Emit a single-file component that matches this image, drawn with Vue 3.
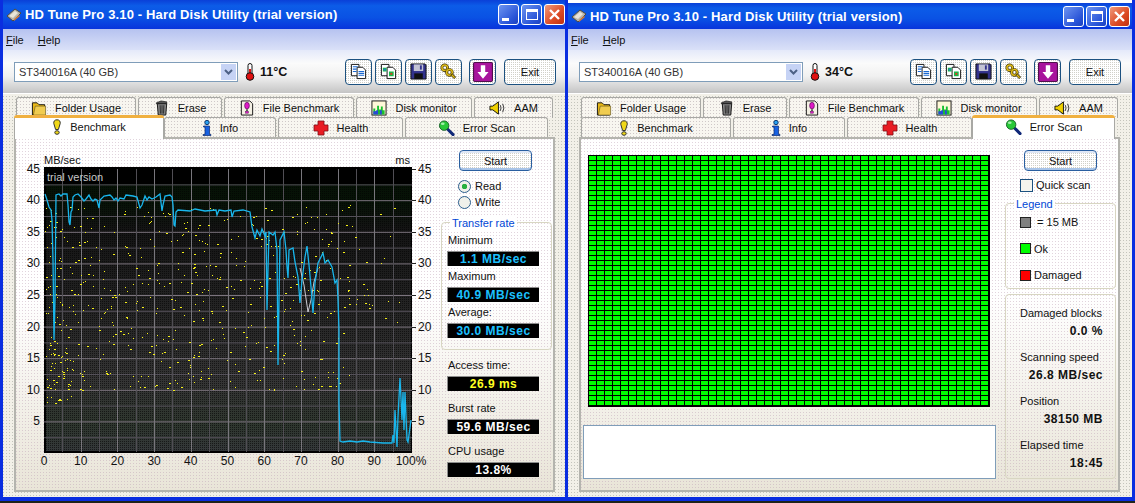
<template>
  <div class="screen">
    <!-- shared icon sheet, both windows <use> from here -->
    <svg class="defs" width="0" height="0">
      <symbol id="i-drive" viewBox="0 0 16 16">
        <path d="M1 9 9 2l6 4-8 8z" fill="#b9b5a8" stroke="#4a4a44"/>
        <path d="M3 9 9 4l3 2-5 5z" fill="#e8e4d8"/>
        <path d="M8 12l5-4 1 1-6 5z" fill="#d27a3a"/>
      </symbol>
      <symbol id="i-thermo" viewBox="0 0 10 18">
        <rect x="3" y="0.5" width="4" height="12" rx="2" fill="#fff" stroke="#111"/>
        <rect x="4" y="6" width="2" height="7" fill="#e01010"/>
        <circle cx="5" cy="13.5" r="3.8" fill="#e01010" stroke="#111"/>
      </symbol>
      <symbol id="i-copy" viewBox="0 0 18 18">
        <path d="M1.5 1.5h8v12h-8z" fill="#fff" stroke="#111"/>
        <path d="M7.5 4.5h6l3 3v9h-9z" fill="#fff" stroke="#111"/>
        <path d="M3 4h5M3 6.500h4M3 9h4M9 9h6M9 11h6M9 13h6" stroke="#1a68d0" stroke-width="1.200"/>
      </symbol>
      <symbol id="i-copy2" viewBox="0 0 18 18">
        <path d="M1.500 1.500h8v12h-8z" fill="#fff" stroke="#111"/>
        <path d="M7.500 4.500h6l3 3v9h-9z" fill="#fff" stroke="#111"/>
        <rect x="3" y="5" width="4" height="4" fill="#18b84a"/>
        <rect x="4" y="6" width="2" height="2" fill="#2a70e0"/>
        <rect x="9.500" y="9" width="5" height="5" fill="#18b84a"/>
        <rect x="11" y="10.500" width="2" height="2" fill="#e03c20"/>
      </symbol>
      <symbol id="i-floppy" viewBox="0 0 18 18">
        <path d="M1 1h15l1 1v15H1z" fill="#33338c" stroke="#111"/>
        <rect x="4" y="1.500" width="10" height="7" fill="#c4c4d4"/>
        <rect x="10.500" y="2.500" width="2" height="4.500" fill="#33338c"/>
        <rect x="4.500" y="11" width="9" height="6" fill="#111"/>
      </symbol>
      <symbol id="i-chain" viewBox="0 0 18 18">
        <circle cx="5" cy="5" r="3" fill="none" stroke="#3a3008" stroke-width="3"/>
        <circle cx="5" cy="5" r="3" fill="none" stroke="#e0bc18" stroke-width="1.600"/>
        <circle cx="10" cy="10" r="3" fill="none" stroke="#3a3008" stroke-width="3"/>
        <circle cx="10" cy="10" r="3" fill="none" stroke="#e0bc18" stroke-width="1.600"/>
        <path d="M12 12l4 4" stroke="#3a3008" stroke-width="3"/>
        <path d="M12.500 12.500l3 3" stroke="#e0bc18" stroke-width="1.500"/>
      </symbol>
      <symbol id="i-down" viewBox="0 0 18 18">
        <rect x="0.500" y="0.500" width="17" height="17" rx="1" fill="#a8149c" stroke="#50104c"/>
        <path d="M7 3h4v6h3l-5 6-5-6h3z" fill="#fff"/>
      </symbol>
      <symbol id="i-folder" viewBox="0 0 16 17">
        <path d="M1 3h5l2 2h6v11H1z" fill="#e8b818" stroke="#111"/>
        <path d="M4 6.500h11V16H2z" fill="#f0cc50" stroke="#5a4a10" stroke-width="0.600"/>
      </symbol>
      <symbol id="i-trash" viewBox="0 0 16 17">
        <path d="M2 3l5-2 6 1v2H2z" fill="#555" stroke="#111" stroke-width="0.700"/>
        <path d="M3 4h10l-1 12H4z" fill="#8a8a8a" stroke="#111"/>
        <path d="M6 5.500l.3 9M8 5.500v9M10 5.500l-.3 9" stroke="#222"/>
      </symbol>
      <symbol id="i-file" viewBox="0 0 16 17">
        <path d="M2 1h9l3 3v12H2z" fill="#f4f0e4" stroke="#111"/>
        <ellipse cx="8" cy="6" rx="2.500" ry="3.500" fill="#e018c8" stroke="#501050" stroke-width="0.700"/>
        <rect x="7" y="10" width="2" height="1.500" fill="#333"/>
        <rect x="6.500" y="12" width="3" height="2" fill="#e018c8" stroke="#501050" stroke-width="0.500"/>
      </symbol>
      <symbol id="i-chart" viewBox="0 0 16 17">
        <rect x="0.500" y="1" width="15" height="15" fill="#fff8d8" stroke="#111"/>
        <path d="M2 15.500V9h2v3h2V6h2v4h2V7h2v4h2v4.500z" fill="#18c030"/>
        <path d="M2 15.500V12h3v-1h2v4.500zM9 15.500V11h2v4.500z" fill="#2848d8"/>
      </symbol>
      <symbol id="i-speaker" viewBox="0 0 18 16">
        <path d="M1 6h3l6-4.500v13L4 10H1z" fill="#f0d000" stroke="#111"/>
        <path d="M12 5q1.500 3 0 6M14.500 3.500q2.500 4.500 0 9" fill="none" stroke="#333"/>
      </symbol>
      <symbol id="i-bulb" viewBox="0 0 10 16">
        <path d="M5 .8C2.500.8 1.500 2.500 1.800 4.500L3.600 10.500h2.800L8.200 4.500C8.500 2.500 7.500.8 5 .8z" fill="#f0d818" stroke="#333"/>
        <ellipse cx="5" cy="13.500" rx="2.200" ry="1.800" fill="#f0d818" stroke="#333"/>
      </symbol>
      <symbol id="i-info" viewBox="0 0 10 16">
        <circle cx="5" cy="2.500" r="2.200" fill="#28a0f0" stroke="#103870"/>
        <path d="M1.500 6h6v8.500h1.500v1H1v-1h2V7H1.500z" fill="#1860e0" stroke="#0a2870" stroke-width="0.700"/>
      </symbol>
      <symbol id="i-cross" viewBox="0 0 16 16">
        <path d="M5 1h6v4h4v6h-4v4H5v-4H1V5h4z" fill="#e81c24" stroke="#801018" stroke-width="0.800"/>
      </symbol>
      <symbol id="i-lens" viewBox="0 0 17 17">
        <path d="M9.500 9.500l6 6" stroke="#102878" stroke-width="3.200" stroke-linecap="round"/>
        <circle cx="6" cy="6" r="5" fill="#28c838" stroke="#186028"/>
        <ellipse cx="4.500" cy="4" rx="2" ry="1.300" fill="#9ff0a8"/>
      </symbol>
    </svg>

    <div v-for="win in windows" :key="win.id" class="window">
      <div class="titlebar">
        <svg class="title-icon"><use href="#i-drive" /></svg>
        <span class="title-text">HD Tune Pro 3.10 - Hard Disk Utility (trial version)</span>
        <div class="caption">
          <span class="cap cap-min"><i></i></span>
          <span class="cap cap-max"><i></i></span>
          <span class="cap cap-close">
            <svg width="13" height="13" viewBox="0 0 13 13"><path d="M2 2l9 9M11 2l-9 9" stroke="#fff" stroke-width="2.400" /></svg>
          </span>
        </div>
      </div>

      <div class="menubar">
        <span><u>F</u>ile</span>
        <span><u>H</u>elp</span>
      </div>

      <div class="toolbar">
        <div class="combo">
          <span>ST340016A (40 GB)</span>
          <span class="combo-btn">
            <svg width="9" height="6" viewBox="0 0 9 6"><path d="M1 1l3.500 3.500L8 1" fill="none" stroke="#4d6185" stroke-width="2" /></svg>
          </span>
        </div>
        <svg class="thermo"><use href="#i-thermo" /></svg>
        <b class="temp">{{ win.temp }}</b>
        <div class="tools">
          <button v-for="t in tools" :key="t" class="tool" :class="{ 'tool-gap': t === 'i-down' }">
            <svg :class="{ 'tool-big': t === 'i-down' }"><use :href="'#' + t" /></svg>
          </button>
          <button class="exit">Exit</button>
        </div>
      </div>

      <div class="tabstrip">
        <div v-for="(row, r) in tabRows" :key="r" class="tabrow">
          <div
            v-for="tab in row"
            :key="tab.label"
            class="tab"
            :class="{ active: tab.label === win.active }"
            :style="{ width: tab.width + 'px' }"
          >
            <svg class="tab-icon" :style="{ width: tab.size + 'px' }"><use :href="'#' + tab.icon" /></svg>
            <span>{{ tab.label }}</span>
          </div>
        </div>
      </div>

      <div class="panel">
        <!-- Benchmark page -->
        <template v-if="win.active === 'Benchmark'">
          <div class="chart">
            <div class="axis axis-left">
              <span v-for="t in yTicks" :key="t" class="tick" :style="{ top: yOf(t) - 167 + 'px' }">{{ t }}</span>
            </div>
            <div class="plot">
              <span class="unit unit-mb">MB/sec</span>
              <span class="unit unit-ms">ms</span>
              <span class="trial">trial version</span>
              <!-- viewBox keeps screen coordinates, read straight off the capture -->
              <svg class="plot-svg" width="368" height="286" viewBox="44 167 368 286">
                <line v-for="y in hLines" :key="'h' + y.at" x1="44" x2="412" :y1="y.at" :y2="y.at" :stroke="y.major ? '#7c747e' : '#55515a'" />
                <line v-for="x in vLines" :key="'v' + x.at" y1="169" y2="452" :x1="x.at" :x2="x.at" :stroke="x.major ? '#78767c' : '#504e54'" />
                <rect v-for="(d, i) in dots" :key="i" :x="d[0]" :y="d[1]" :width="d[2]" height="1" fill="#f6f218" />
                <polyline :points="ghostLine" fill="none" stroke="#c8c8d0" stroke-width="1" />
                <polyline :points="readLine" fill="none" stroke="#19b6ec" stroke-width="1.300" />
              </svg>
              <span v-for="t in xTicks" :key="t" class="xtick" :style="{ left: (t * 3.67).toFixed(1) + 'px' }">{{ t === 100 ? '100%' : t }}</span>
            </div>
            <div class="axis axis-right">
              <span v-for="t in yTicks" :key="t" class="tick" :style="{ top: yOf(t) - 167 + 'px' }">{{ t }}</span>
            </div>
          </div>

          <div class="side">
            <button class="start">Start</button>
            <div class="radios">
              <label class="radio"><i class="dot on"></i>Read</label>
              <label class="radio"><i class="dot"></i>Write</label>
            </div>
            <div class="group rate">
              <span class="legend">Transfer rate</span>
              <template v-for="s in rates" :key="s.label">
                <div class="stat-label">{{ s.label }}</div>
                <div class="stat-value">{{ s.value }}</div>
              </template>
            </div>
            <div class="extras">
              <div v-for="s in extras" :key="s.label" class="extra">
                <div class="stat-label">{{ s.label }}</div>
                <div class="stat-value" :class="s.cls">{{ s.value }}</div>
              </div>
            </div>
          </div>
        </template>

        <!-- Error Scan page -->
        <template v-else>
          <div class="scan">
            <div class="blocks"></div>
            <div class="logbox"></div>
          </div>
          <div class="side side-scan">
            <button class="start">Start</button>
            <label class="check"><i></i>Quick scan</label>
            <div class="group legend-box">
              <span class="legend">Legend</span>
              <div v-for="l in legend" :key="l.label" class="key">
                <i :style="{ background: l.color }"></i>{{ l.label }}
              </div>
            </div>
            <div class="group numbers">
              <div v-for="n in scanStats" :key="n.label" class="num">
                <div>{{ n.label }}</div>
                <b>{{ n.value }}</b>
              </div>
            </div>
          </div>
        </template>
      </div>
    </div>
  </div>
</template>

<script setup>
const windows = [
  { id: 1, temp: '11°C', active: 'Benchmark' },
  { id: 2, temp: '34°C', active: 'Error Scan' },
]

const tools = ['i-copy', 'i-copy2', 'i-floppy', 'i-chain', 'i-down']

const tabRows = [
  [
    { label: 'Folder Usage', icon: 'i-folder', width: 120, size: 16 },
    { label: 'Erase', icon: 'i-trash', width: 84, size: 16 },
    { label: 'File Benchmark', icon: 'i-file', width: 130, size: 16 },
    { label: 'Disk monitor', icon: 'i-chart', width: 116, size: 16 },
    { label: 'AAM', icon: 'i-speaker', width: 79, size: 17 },
  ],
  [
    { label: 'Benchmark', icon: 'i-bulb', width: 150, size: 10 },
    { label: 'Info', icon: 'i-info', width: 112, size: 10 },
    { label: 'Health', icon: 'i-cross', width: 125, size: 16 },
    { label: 'Error Scan', icon: 'i-lens', width: 143, size: 17 },
  ],
]

const yTicks = [45, 40, 35, 30, 25, 20, 15, 10, 5]
const xTicks = [0, 10, 20, 30, 40, 50, 60, 70, 80, 90, 100]
const yOf = v => Math.round(453 - v * 6.32)

const hLines = []
for (let i = 1; i < 18; i++) hLines.push({ at: 453.5 - i * 15.8, major: i % 2 === 0 })
const vLines = []
for (let i = 1; i < 20; i++) vLines.push({ at: Math.round(44 + i * 18.35) + 0.5, major: i % 2 === 0 })

const readLine = `45,194 47,200 49,207 51,210 52,220 53,260 54,340 55,300 56,195 59,194 61,196 63,194 67,194 68,205 69,222
70,225 71,212 72,210 73,197 75,195 78,194 81,197 84,201 86,199 89,195 91,199 93,201 95,199 97,200 99,208 100,200 104,196
110,195 112,197 114,200 116,198 118,201 120,198 124,199 126,195 133,196 137,197 140,208 142,205 145,196 147,200 149,197
152,199 156,197 160,194 162,211 163,205 165,196 170,195 172,197 173,205 174,225 175,226 176,212 178,210 190,211 195,209
205,211 216,210 217,215 219,210 225,211 231,210 232,217 234,211 243,210 250,212 252,227 255,238 257,230 260,236 262,229
265,236 266,232 267,310 268,270 269,232 273,235 275,232 277,250 278,365 279,300 280,240 284,232 286,250 287,267 288,278
289,250 293,248 295,262 298,277 300,303 302,280 305,257 307,246 309,265 311,287 313,313 315,283 318,263 323,253 325,263
328,260 332,267 335,283 337,280 338,300 339,330 339,403 340,441 343,442 350,441 357,442 363,441 370,442 383,443 392,443
393,435 394,443 395,410 397,447 398,417 400,378 402,420 403,392 404,430 405,392 407,440 408,442 411,420`

const ghostLine = '300,268 304,285 308,312 311,300 314,282 318,268'

// scatter of access times, seeded so the picture stays the same on every run
let seed = 1135
const rnd = () => {
  seed = (seed + 0x6d2b79f5) | 0
  let t = Math.imul(seed ^ (seed >>> 15), 1 | seed)
  t = (t + Math.imul(t ^ (t >>> 7), 61 | t)) ^ t
  return ((t ^ (t >>> 14)) >>> 0) / 4294967296
}
const dot = (x, y) => [Math.round(x), Math.round(y), rnd() < 0.3 ? 2 : 1]
const dots = []
for (let i = 0; i < 540; i++) dots.push(dot(45 + Math.pow(rnd(), 1.3) * 305, 205 + rnd() * 185))
for (let i = 0; i < 35; i++) dots.push(dot(46 + rnd() * 28, 345 + rnd() * 60))
for (let i = 0; i < 30; i++) dots.push(dot(340 + rnd() * 60, 205 + rnd() * 120))

const rates = [
  { label: 'Minimum', value: '1.1 MB/sec' },
  { label: 'Maximum', value: '40.9 MB/sec' },
  { label: 'Average:', value: '30.0 MB/sec' },
]
const extras = [
  { label: 'Access time:', value: '26.9 ms', cls: 'yellow' },
  { label: 'Burst rate', value: '59.6 MB/sec', cls: 'white' },
  { label: 'CPU usage', value: '13.8%', cls: 'white' },
]

const legend = [
  { label: ' = 15 MB', color: '#808080' },
  { label: 'Ok', color: '#00ff00' },
  { label: 'Damaged', color: '#ff0000' },
]
const scanStats = [
  { label: 'Damaged blocks', value: '0.0 %' },
  { label: 'Scanning speed', value: '26.8 MB/sec' },
  { label: 'Position', value: '38150 MB' },
  { label: 'Elapsed time', value: '18:45' },
]
</script>

<style scoped>
.screen {
  --ui: "Liberation Sans", Arial, sans-serif;
  --speck: conic-gradient(at 1px 1px, transparent 75%, #c4c4bc 0);
  display: flex;
  align-items: flex-start;
  width: 1135px;
  height: 503px;
  overflow: hidden;
  background: #1e241c;
  font: 11px var(--ui);
  color: #111;
}
.defs { position: absolute; }

.window {
  flex: none;
  box-sizing: border-box;
  width: 565px;
  height: 501px;
  border-left: 3px solid #0a2ee0;
  border-bottom: 4px solid #0a2ee0;
  background: var(--speck) 0 0 / 3px 3px, #f2f0e8;
}
.window:last-child {
  width: 570px;
  border-right: 3px solid #0a2ee0;
}

.titlebar {
  display: flex;
  align-items: center;
  box-sizing: border-box;
  height: 29px;
  padding-left: 3px;
  background: linear-gradient(#0a40d8, #0c5ce8 20%, #0a52e4 60%, #0834dc);
}
.window:last-child .titlebar { border-top: 3px solid #fff; }
.title-icon { width: 16px; height: 16px; margin-right: 3px; }
.title-text {
  font-weight: 700;
  font-size: 13px;
  letter-spacing: 0.15px;
  color: #fff;
  white-space: nowrap;
}
.caption {
  display: flex;
  gap: 2px;
  width: 67px;
  margin-left: auto;
}
.window:last-child .caption { margin-right: 2px; }
.cap {
  display: flex;
  align-items: center;
  justify-content: center;
  position: relative;
  box-sizing: border-box;
  width: 21px;
  height: 21px;
  border: 1px solid #fff;
  border-radius: 3px;
  background: linear-gradient(135deg, #6d94f0, #2a55d8 70%, #1c40c0);
}
.cap-close { background: linear-gradient(135deg, #f09a7c, #dc4a24 60%, #c03010); }
.cap-min i { display: block; width: 7px; height: 3px; margin: 9px 6px 0 0; background: #fff; }
.cap-max i { display: block; box-sizing: border-box; width: 12px; height: 11px; border: 1px solid #fff; border-top-width: 3px; }

.menubar {
  display: flex;
  gap: 14px;
  align-items: center;
  box-sizing: border-box;
  height: 21px;
  padding-left: 3px;
  background: linear-gradient(#b6c2f0, #dae1f8);
}
.toolbar {
  display: flex;
  align-items: center;
  box-sizing: border-box;
  width: 562px;
  height: 44px;
  padding: 0 0 1px 11px;
  background: linear-gradient(#e4e9fa, #fbfbfb 30%, #f0f0f0 60%, #c4c4c4 98%, #fff 98%);
}
.window:last-child .toolbar { width: 564px; }
.combo {
  display: flex;
  align-items: center;
  justify-content: space-between;
  box-sizing: border-box;
  width: 224px;
  height: 20px;
  padding: 0 1px 0 4px;
  border: 1px solid #7f9db9;
  background: #fff;
  color: #333;
}
.combo-btn {
  display: flex;
  align-items: center;
  justify-content: center;
  width: 15px;
  height: 16px;
  background: #c6d3f5;
}
.thermo { width: 10px; height: 18px; margin-left: 7px; }
.temp { width: 30px; margin-left: 5px; font-size: 12.5px; }
.tools { display: flex; margin-left: 55px; gap: 3px; }
.tool, .exit, .start {
  box-sizing: border-box;
  height: 26px;
  padding: 0;
  border: 1px solid #1c5180;
  border-radius: 4px;
  background: conic-gradient(at 1px 1px, transparent 75%, #d0d0c8 0) 0 0 / 2px 2px, #fff;
  font: inherit;
  color: #111;
}
.tool { display: flex; align-items: center; justify-content: center; width: 27px; }
.tool svg { width: 17px; height: 17px; }
.tool svg.tool-big { width: 20px; height: 20px; }
.tool-gap { margin-left: 4px; }
.exit { width: 52px; margin-left: 5px; }

.tabstrip { padding: 3px 0 0 13px; }
.tabrow { display: flex; gap: 2px; height: 20px; }
.tab {
  display: flex;
  align-items: center;
  justify-content: center;
  gap: 8px;
  position: relative;
  box-sizing: border-box;
  height: 21px;
  border: 1px solid #a8a8a4;
  border-bottom: 0;
  border-radius: 3px 3px 0 0;
  background: conic-gradient(at 1px 1px, transparent 75%, #cfc8c8 0) 0 0 / 3px 3px, #f8f6f0;
  white-space: nowrap;
}
.tab.active {
  z-index: 2;
  height: 24px;
  margin: -2px -2px 0;
  padding-bottom: 3px;
  border: 0;
  border-top: 3px solid #f0b040;
  background: #fff;
  box-shadow: inset 1px 0 #a8a8a4, inset -1px 0 #a8a8a4;
}
.tab-icon { height: 16px; flex: none; }

.panel {
  display: flex;
  position: relative;
  box-sizing: border-box;
  width: 541px;
  height: 355px;
  margin-left: 11px;
  border: 2px solid #b4b4ae;
  background:
    conic-gradient(at 1px 1px, transparent 75%, rgba(190, 160, 180, 0.45) 0) 0 0 / 3px 3px,
    linear-gradient(#fff 45%, #e9e5d8 100%);
}

/* benchmark chart */
.chart {
  display: flex;
  flex: none;
  padding-top: 28px;
}
.axis { position: relative; width: 28px; height: 286px; }
.axis-right { width: 29px; }
.tick {
  position: absolute;
  right: 4px;
  transform: translateY(-50%);
  line-height: 14px;
  font-size: 12px;
}
.axis-right .tick { right: auto; left: 6px; }
.axis-right .tick::before {
  content: "";
  position: absolute;
  left: -6px;
  top: 7px;
  width: 4px;
  height: 1px;
  background: #222;
}
.plot {
  position: relative;
  box-sizing: border-box;
  width: 368px;
  height: 286px;
  background:
    conic-gradient(at 1px 1px, transparent 75%, rgba(0, 0, 0, 0.55) 0) 0 0 / 2px 2px,
    linear-gradient(#000 0 6%, #061206 6% 12%, #141414 22%, #242424 50%, #343434 75%, #2e362e 90%, #34383a);
  box-shadow: inset 2px 2px #000, inset -1px -2px #000;
}
.plot-svg { position: absolute; inset: 0; overflow: visible; }
.unit { position: absolute; top: -13px; line-height: 13px; font-size: 11px; }
.unit-mb { left: 0; }
.unit-ms { right: 2px; }
.trial {
  position: absolute;
  top: 3px;
  left: 3px;
  z-index: 1;
  line-height: 14px;
  font-size: 11px;
  color: #c8c8c8;
}
.xtick {
  position: absolute;
  top: 287px;
  transform: translateX(-50%);
  line-height: 14px;
  font-size: 12px;
}

/* right column, shared by both pages */
.side {
  flex: none;
  box-sizing: border-box;
  width: 111px;
  padding-top: 11px;
}
.start {
  display: block;
  width: 73px;
  height: 21px;
  margin-left: 18px;
  border: 1px solid #2a5fa0;
  box-shadow: inset 0 -2px #a8c4e8, inset 0 2px #dfe8f6;
}
.radios { margin: 7px 0 12px 17px; }
.radio { display: flex; align-items: center; gap: 4px; height: 16px; }
.dot {
  box-sizing: border-box;
  display: block;
  width: 13px;
  height: 13px;
  border: 1px solid #2b5d8c;
  border-radius: 50%;
  background: #f0f0ea;
}
.dot.on { background: radial-gradient(circle, #28b040 2.500px, #f0f0ea 3px); }

.group {
  position: relative;
  box-sizing: border-box;
  border: 1px solid #d8d6c2;
  border-radius: 4px;
}
.legend {
  position: absolute;
  top: -7px;
  left: 8px;
  padding: 0 2px;
  line-height: 14px;
  background: #fff;
  color: #0046d5;
}
.rate { height: 128px; padding: 7px 0 0 5px; }
.stat-label { height: 21px; line-height: 21px; padding-left: 1px; }
.stat-value {
  box-sizing: border-box;
  width: 92px;
  height: 15px;
  border-top: 1px solid #8c8c8c;
  border-left: 1px solid #8c8c8c;
  background: #000;
  color: #1cc0ff;
  font-weight: 700;
  font-size: 12px;
  letter-spacing: 0.5px;
  line-height: 14px;
  text-align: center;
}
.stat-value.yellow { color: #ffff20; }
.stat-value.white { color: #fff; }
.extras { padding: 5px 0 0 6px; }
.extra + .extra { margin-top: 7px; }

/* error scan page */
.scan { flex: none; width: 424px; padding: 16px 0 0 2px; box-sizing: border-box; }
.blocks {
  box-sizing: border-box;
  width: 402px;
  height: 252px;
  margin-left: 5px;
  background:
    linear-gradient(90deg, #000 1px, transparent 1px) 0 0 / 8px 5px,
    linear-gradient(#000 1px, transparent 1px) 0 0 / 8px 5px,
    #00ff00;
  box-shadow: inset -2px -1px #000;
}
.logbox {
  box-sizing: border-box;
  width: 413px;
  height: 54px;
  margin-top: 18px;
  border: 1px solid #7f9db9;
  background: #fff;
}
.side-scan .start { margin-left: 19px; }
.check { display: flex; align-items: center; gap: 3px; height: 16px; margin: 6px 0 10px 15px; }
.check i {
  display: block;
  box-sizing: border-box;
  width: 13px;
  height: 13px;
  border: 1px solid #1c5180;
  background: #f4f4ee;
}
.legend-box { height: 86px; padding-top: 5px; }
.key {
  display: flex;
  align-items: center;
  gap: 3px;
  height: 26.500px;
  padding-left: 14px;
  white-space: pre;
}
.key i {
  display: block;
  box-sizing: border-box;
  width: 11px;
  height: 11px;
  border: 1px solid #222;
}
.numbers {
  height: 185px;
  margin-top: 5px;
  padding-top: 9px;
}
.num { height: 44px; padding: 0 12px 0 14px; line-height: 18px; white-space: nowrap; }
.num b { display: block; font-size: 12px; text-align: right; letter-spacing: 0.5px; }
</style>

<style>
html, body { margin: 0; background: #1e241c; }
</style>
